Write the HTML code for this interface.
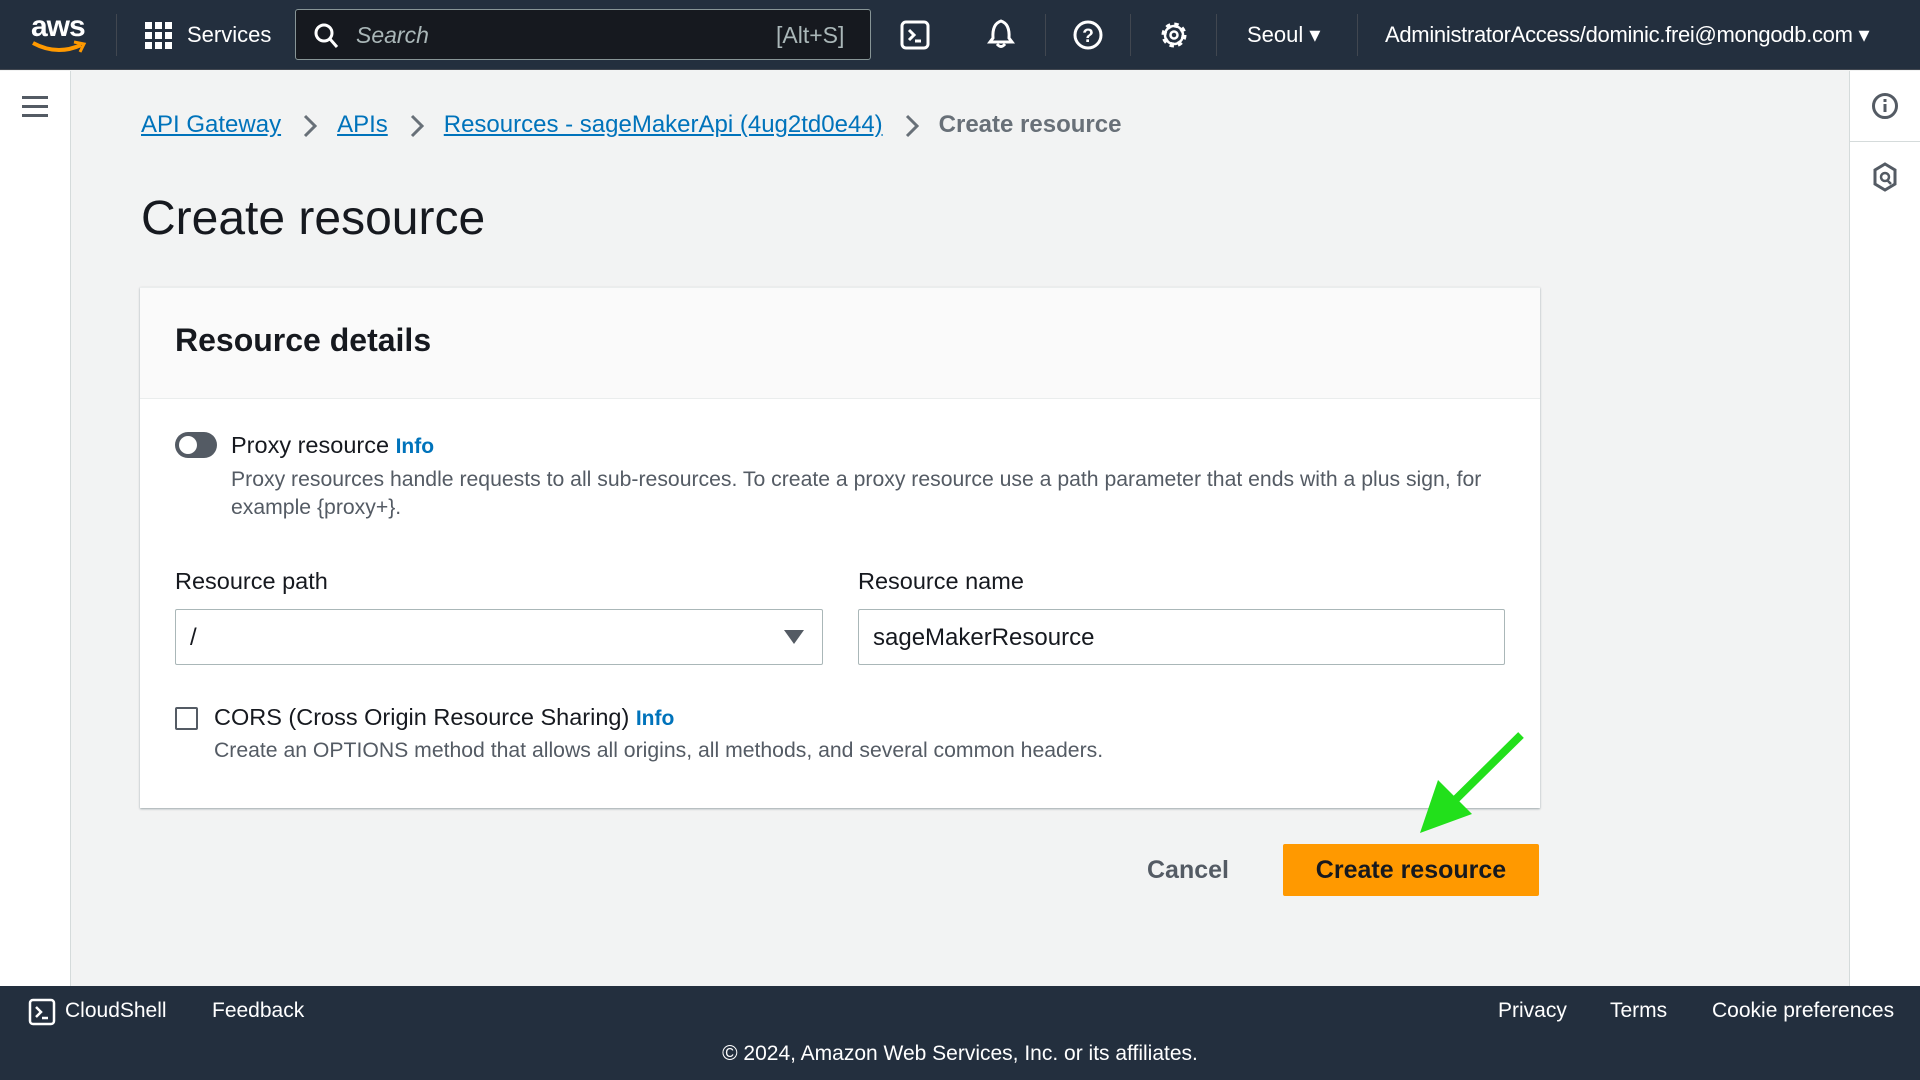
<!DOCTYPE html>
<html><head><meta charset="utf-8"><style>
*{box-sizing:border-box;margin:0;padding:0}
body{width:1920px;height:1080px;overflow:hidden;background:#f2f3f3;font-family:"Liberation Sans",sans-serif;position:relative;color:#16191f}
.a{position:absolute;white-space:nowrap}
#top{position:absolute;left:0;top:0;width:1920px;height:70px;background:#232f3e;border-bottom:1px solid #414750}
.sep{position:absolute;top:14px;width:1px;height:42px;background:#414750}
.tw{color:#fff;font-size:22px;top:22px}
#foot{position:absolute;left:0;top:986px;width:1920px;height:94px;background:#232f3e;color:#fff}
#foot .a{font-size:21px}
.lk{color:#0073bb;text-decoration:underline}
.card{position:absolute;left:140px;top:287px;width:1400px;height:521px;background:#fff;box-shadow:0 1px 2px rgba(0,28,36,.35);border-top:1px solid #eaeded}
.card .hd{height:111px;background:#fafafa;border-bottom:1px solid #eaeded}
.lbl{font-size:23.5px;color:#16191f}
.desc{font-size:21.2px;color:#545b64}
.info{color:#0073bb;font-weight:bold;font-size:21px}
.inp{position:absolute;border:1px solid #aab7b8;border-radius:2px;height:56px;font-size:24px;padding:14px 14px}
.chev{display:inline-block;vertical-align:middle;margin:0 20px 0 22px}
</style></head><body>
<div id="top">
 <div class="a" style="left:31px;top:10px;color:#fff;font-size:30px;font-weight:bold;letter-spacing:-1px">aws</div>
 <svg class="a" style="left:31px;top:40px" width="56" height="14"><path d="M2 3 Q26 16 50 5" stroke="#f90" stroke-width="4" fill="none"/><path d="M43 2 L53 4 L49 12" stroke="#f90" stroke-width="3" fill="none"/></svg>
 <div class="sep" style="left:116px"></div>
 <svg class="a" style="left:145px;top:22px" width="27" height="27" fill="#fff"><rect x="0" y="0" width="7" height="7"/><rect x="10" y="0" width="7" height="7"/><rect x="20" y="0" width="7" height="7"/><rect x="0" y="10" width="7" height="7"/><rect x="10" y="10" width="7" height="7"/><rect x="20" y="10" width="7" height="7"/><rect x="0" y="20" width="7" height="7"/><rect x="10" y="20" width="7" height="7"/><rect x="20" y="20" width="7" height="7"/></svg>
 <div class="a tw" style="left:187px">Services</div>
 <div class="a" style="left:295px;top:9px;width:576px;height:51px;background:#16191f;border:1px solid #879596;border-radius:3px"></div>
 <svg class="a" style="left:313px;top:22px" width="26" height="28"><circle cx="11" cy="11" r="8" stroke="#fff" stroke-width="3" fill="none"/><path d="M17 17 L24 25" stroke="#fff" stroke-width="3"/></svg>
 <div class="a" style="left:356px;top:22px;color:#aab7b8;font-size:23px;font-style:italic">Search</div>
 <div class="a" style="left:776px;top:22px;color:#aab7b8;font-size:23px">[Alt+S]</div>
 <svg class="a" style="left:900px;top:20px" width="30" height="30"><rect x="2" y="2" width="26" height="26" rx="4" stroke="#fff" stroke-width="3" fill="none"/><path d="M9 10 L14 15 L9 20 M15 21 H21" stroke="#fff" stroke-width="3" fill="none"/></svg>
 <svg class="a" style="left:986px;top:18px" width="30" height="32"><path d="M15 3 Q6 6 7 20 L4 24 H26 L23 20 Q24 6 15 3Z M11 26 Q15 31 19 26" stroke="#fff" stroke-width="3" fill="none"/></svg>
 <div class="sep" style="left:1045px"></div>
 <svg class="a" style="left:1072px;top:19px" width="32" height="32"><circle cx="16" cy="16" r="13" stroke="#fff" stroke-width="3" fill="none"/><text x="16" y="23" text-anchor="middle" fill="#fff" font-size="19" font-weight="bold" font-family="Liberation Sans">?</text></svg>
 <div class="sep" style="left:1130px"></div>
 <svg class="a" style="left:1158px;top:19px" width="32" height="32"><circle cx="16" cy="16" r="10" stroke="#fff" stroke-width="5" stroke-dasharray="4 3.85" fill="none"/><circle cx="16" cy="16" r="9" stroke="#fff" stroke-width="2.5" fill="none"/><circle cx="16" cy="16" r="3.5" stroke="#fff" stroke-width="2.5" fill="none"/></svg>
 <div class="sep" style="left:1216px"></div>
 <div class="a tw" style="left:1247px">Seoul ▾</div>
 <div class="sep" style="left:1357px"></div>
 <div class="a tw" style="left:1385px;letter-spacing:-0.3px">AdministratorAccess/dominic.frei@mongodb.com ▾</div>
</div>
<div class="a" style="left:0;top:71px;width:71px;height:915px;background:#fff;border-right:1px solid #d5dbdb"></div>
<svg class="a" style="left:22px;top:96px" width="26" height="22" fill="#545b64"><rect y="0" width="26" height="3"/><rect y="9" width="26" height="3"/><rect y="18" width="26" height="3"/></svg>
<div class="a" style="left:1849px;top:71px;width:71px;height:915px;background:#fff;border-left:1px solid #d5dbdb"></div>
<div class="a" style="left:1849px;top:141px;width:71px;height:1px;background:#d5dbdb"></div>
<svg class="a" style="left:1871px;top:92px" width="28" height="28"><circle cx="14" cy="14" r="11.5" stroke="#545b64" stroke-width="3" fill="none"/><rect x="12.5" y="12" width="3" height="8" fill="#545b64"/><rect x="12.5" y="7" width="3" height="3" fill="#545b64"/></svg>
<svg class="a" style="left:1872px;top:162px" width="26" height="30"><path d="M13 2 L23 8 V22 L13 28 L3 22 V8Z" stroke="#545b64" stroke-width="3" fill="none"/><circle cx="13" cy="15" r="4" stroke="#545b64" stroke-width="2.5" fill="none"/><path d="M15 18 L19 22" stroke="#545b64" stroke-width="2.5"/></svg>

<div class="a" style="left:141px;top:111px;font-size:24px"><span class="lk">API Gateway</span><svg class="chev" width="14" height="24"><path d="M2 2 L12 12 L2 22" stroke="#687078" stroke-width="3" fill="none"/></svg><span class="lk">APIs</span><svg class="chev" width="14" height="24"><path d="M2 2 L12 12 L2 22" stroke="#687078" stroke-width="3" fill="none"/></svg><span class="lk">Resources - sageMakerApi (4ug2td0e44)</span><svg class="chev" width="14" height="24"><path d="M2 2 L12 12 L2 22" stroke="#687078" stroke-width="3" fill="none"/></svg><span style="color:#687078;font-weight:bold">Create resource</span></div>
<div class="a" style="left:141px;top:191px;font-size:48px;color:#16191f">Create resource</div>

<div class="card"><div class="hd"></div></div>
<div class="a" style="left:175px;top:322px;font-size:32px;font-weight:bold">Resource details</div>
<div class="a" style="left:175px;top:432px;width:42px;height:26px;border-radius:13px;background:#545b64"></div>
<div class="a" style="left:179px;top:436px;width:18px;height:18px;border-radius:50%;background:#fff"></div>
<div class="a lbl" style="left:231px;top:432px">Proxy resource <span class="info">Info</span></div>
<div class="a desc" style="left:231px;top:466px;line-height:28px">Proxy resources handle requests to all sub-resources. To create a proxy resource use a path parameter that ends with a plus sign, for<br>example {proxy+}.</div>
<div class="a lbl" style="left:175px;top:568px">Resource path</div>
<div class="inp a" style="left:175px;top:609px;width:648px">/</div>
<svg class="a" style="left:783px;top:629px" width="22" height="16"><path d="M1 1 H21 L11 15Z" fill="#545b64"/></svg>
<div class="a lbl" style="left:858px;top:568px">Resource name</div>
<div class="inp a" style="left:858px;top:609px;width:647px">sageMakerResource</div>
<div class="a" style="left:175px;top:707px;width:23px;height:23px;border:2px solid #545b64;border-radius:2px;background:#fff"></div>
<div class="a lbl" style="left:214px;top:704px">CORS (Cross Origin Resource Sharing) <span class="info">Info</span></div>
<div class="a desc" style="left:214px;top:739px">Create an OPTIONS method that allows all origins, all methods, and several common headers.</div>
<div class="a" style="left:1147px;top:856px;font-size:25px;font-weight:bold;color:#545b64">Cancel</div>
<div class="a" style="left:1283px;top:844px;width:256px;height:52px;background:#ff9900;border-radius:2px;font-size:25px;font-weight:bold;text-align:center;line-height:52px">Create resource</div>
<svg class="a" style="left:1410px;top:730px" width="120" height="110"><path d="M111 5 L40 75" stroke="#22e01b" stroke-width="8"/><path d="M10 103 L28 50 L62 84Z" fill="#22e01b"/></svg>

<div id="foot">
 <svg class="a" style="left:28px;top:12px" width="28" height="28"><rect x="2" y="2" width="24" height="24" rx="3" stroke="#fff" stroke-width="2.5" fill="none"/><path d="M8 9 L13 14 L8 19 M14 20 H20" stroke="#fff" stroke-width="2.5" fill="none"/></svg>
 <div class="a" style="left:65px;top:13px">CloudShell</div>
 <div class="a" style="left:212px;top:13px">Feedback</div>
 <div class="a" style="left:1498px;top:13px">Privacy</div>
 <div class="a" style="left:1610px;top:13px">Terms</div>
 <div class="a" style="left:1712px;top:13px">Cookie preferences</div>
 <div class="a" style="left:0;width:1920px;text-align:center;top:56px">© 2024, Amazon Web Services, Inc. or its affiliates.</div>
</div>
</body></html>
